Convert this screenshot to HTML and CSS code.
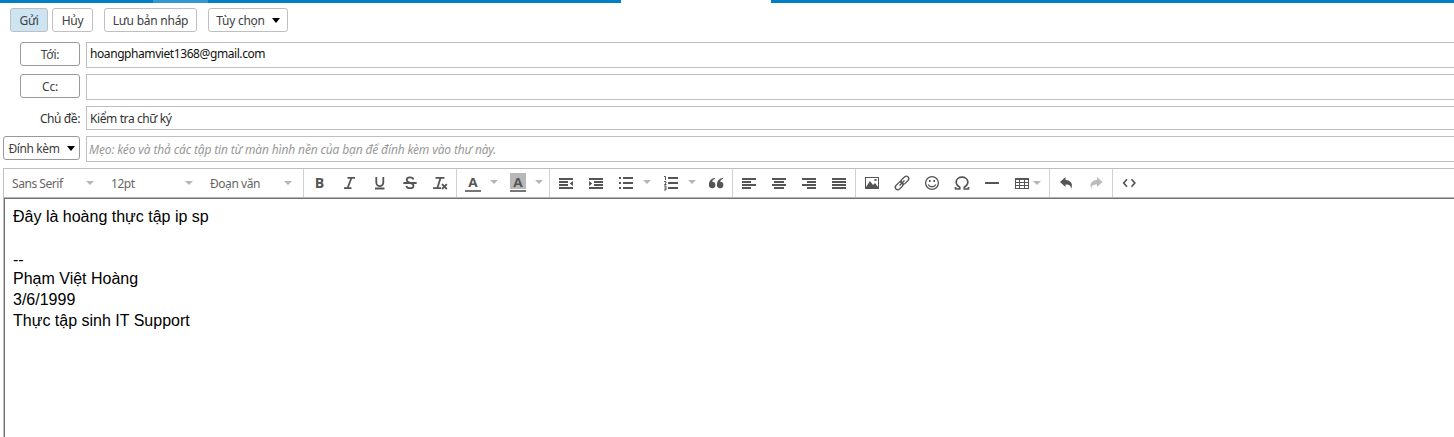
FILE: index.html
```html
<!DOCTYPE html>
<html lang="vi">
<head>
<meta charset="utf-8">
<title>Soạn thư</title>
<link rel="stylesheet" href="styles.css">
</head>
<body>
<div class="tabs"><span class="tab-app"></span><span class="tab-active"></span></div>
<div class="actions">
  <button class="btn send"><span>Gửi</span></button>
  <button class="btn cancel"><span>Hủy</span></button>
  <button class="btn draft"><span>Lưu bản nháp</span></button>
  <button class="btn options"><span>Tùy chọn</span><i class="caret"></i></button>
</div>
<div class="header">
  <div class="row to"><div class="label"><button class="btn dark pick"><span>Tới:</span></button></div><div class="field"><span class="address">hoangphamviet1368@gmail.com</span></div></div>
  <div class="row cc"><div class="label"><button class="btn dark pick"><span>Cc:</span></button></div><div class="field"></div></div>
  <div class="row subject"><div class="label"><span class="subject-label">Chủ đề:</span></div><div class="field"><span class="subject-text">Kiểm tra chữ ký</span></div></div>
  <div class="row attach"><div class="label"><button class="btn dark attach-btn"><span>Đính kèm</span><i class="caret"></i></button></div><div class="field"><span class="hint">Mẹo: kéo và thả các tập tin từ màn hình nền của bạn để đính kèm vào thư này.</span></div></div>
</div>
<div class="composer">
  <div class="toolbar">
    <div class="group selects">
      <div class="select font"><span>Sans Serif</span><i class="arrow"></i></div>
      <div class="select size"><span>12pt</span><i class="arrow"></i></div>
      <div class="select block"><span>Đoạn văn</span><i class="arrow"></i></div>
    </div>
    <div class="group">
      <div class="tool"><svg viewBox="0 0 20 20"><text class="glyph bold" x="4.8" y="15" textLength="9.5" lengthAdjust="spacingAndGlyphs">B</text></svg></div>
      <div class="tool"><svg viewBox="0 0 20 20"><path class="line" d="M7.500 4.800h7.500M4 15.200h7.500M11.400 5 7.600 15"/></svg></div>
      <div class="tool"><svg viewBox="0 0 20 20"><path class="line" d="M6.300 4v5.600a3.500 3.500 0 0 0 7 0V4M5 15.500h9.500"/></svg></div>
      <div class="tool"><svg viewBox="0 0 20 20"><path class="line" d="M13.500 6.500C12.600 3.500 6.600 3.600 6.700 7c.1 3.700 6.800 2.100 6.800 5.700 0 3.200-6.300 3.400-7.200.2M3.300 10h13.300"/></svg></div>
      <div class="tool"><svg viewBox="0 0 20 20"><path class="line" d="M5.500 4.800h9M3 15.200h8M10.500 5 7.400 15M12 11.200l4.800 4.800M16.800 11.200 12 16"/></svg></div>
    </div>
    <div class="group">
      <div class="tool split"><svg viewBox="0 0 20 20"><text class="glyph" x="5.2" y="14" textLength="9.400" lengthAdjust="spacingAndGlyphs">A</text><path fill="#777" d="M2 17h16v2H2z"/></svg><i class="arrow"></i></div>
      <div class="tool split"><svg viewBox="0 0 20 20"><path fill="#b8b8b8" d="M2 0h16v16H2z"/><text class="glyph" x="5.2" y="14" textLength="9.400" lengthAdjust="spacingAndGlyphs">A</text><path fill="#777" d="M2 17h16v2H2z"/></svg><i class="arrow"></i></div>
    </div>
    <div class="group">
      <div class="tool"><svg viewBox="0 0 20 20"><path d="M3 5h14v2H3zM3 8h9v2H3zM3 11h9v2H3zM3 14h14v2H3zM17 8v5l-3.300-2.500z"/></svg></div>
      <div class="tool"><svg viewBox="0 0 20 20"><path d="M3 5h14v2H3zM8 8h9v2H8zM8 11h9v2H8zM3 14h14v2H3zM3 8v5l3.300-2.500z"/></svg></div>
      <div class="tool split"><svg viewBox="0 0 20 20"><path d="M7 4h10v2H7zM7 9h10v2H7zM7 14h10v2H7zM3 4h2v2H3zM3 9h2v2H3zM3 14h2v2H3z"/></svg><i class="arrow"></i></div>
      <div class="tool split"><svg viewBox="0 0 20 20"><path d="M7 4h10v2H7zM7 9h10v2H7zM7 14h10v2H7z"/><path class="fine" d="M3 3.500h1.500v3.500M3 8.500h2v1.500L3.500 11.500H5.500M3 13h2v4H3M3.300 15H5"/></svg><i class="arrow"></i></div>
      <div class="tool"><svg viewBox="0 0 20 20"><path d="M9 5C5.300 5 3 8 3 11.500A3.200 3.200 0 1 0 6.200 8.800C6.500 7.300 7.500 6.200 9 6zM17 5C13.300 5 11 8 11 11.500A3.200 3.200 0 1 0 14.200 8.800C14.500 7.300 15.500 6.200 17 6z"/></svg></div>
    </div>
    <div class="group">
      <div class="tool"><svg viewBox="0 0 20 20"><path d="M3 5h14v2H3zM3 8h9v2H3zM3 11h14v2H3zM3 14h9v2H3z"/></svg></div>
      <div class="tool"><svg viewBox="0 0 20 20"><path d="M3 5h14v2H3zM5 8h10v2H5zM3 11h14v2H3zM5 14h10v2H5z"/></svg></div>
      <div class="tool"><svg viewBox="0 0 20 20"><path d="M3 5h14v2H3zM8 8h9v2H8zM3 11h14v2H3zM8 14h9v2H8z"/></svg></div>
      <div class="tool"><svg viewBox="0 0 20 20"><path d="M3 5h14v2H3zM3 8h14v2H3zM3 11h14v2H3zM3 14h14v2H3z"/></svg></div>
    </div>
    <div class="group">
      <div class="tool"><svg viewBox="0 0 20 20"><path fill-rule="evenodd" d="M3 4h14v12H3zM4 5v9l4-6 3 4 2-2 3 4V5zM12.500 6h2v2h-2z"/></svg></div>
      <div class="tool"><svg viewBox="0 0 20 20"><g class="thin" transform="rotate(-45 10 10)"><rect x="1.500" y="7.500" width="9" height="5" rx="2.500"/><rect x="9.500" y="7.500" width="9" height="5" rx="2.500"/><path d="M6.500 10h7"/></g></svg></div>
      <div class="tool"><svg viewBox="0 0 20 20"><circle class="thin" cx="10" cy="10" r="6.400"/><path d="M7 7h1.600v2H7zM11.400 7H13v2h-1.600z"/><path class="thin" d="M6.200 11.500c1.500 3 6.100 3 7.600 0"/></svg></div>
      <div class="tool"><svg viewBox="0 0 20 20"><path class="omega" d="M3.500 16h4.200v-1.800C5 12.500 4 10.800 4.200 8.700c.4-6 11.200-6 11.600 0 .2 2.100-.8 3.800-3.500 5.500V16h4.200M3.500 16.500V14M16.500 16.500V14"/></svg></div>
      <div class="tool"><svg viewBox="0 0 20 20"><path d="M3 9h14v2H3z"/></svg></div>
      <div class="tool table"><svg viewBox="0 0 20 20"><path fill-rule="evenodd" d="M3 5h14v11H3zM4 7v2h3V7zM8 7v2h4V7zM13 7v2h3V7zM4 10v2h3v-2zM8 10v2h4v-2zM13 10v2h3v-2zM4 13v2h3v-2zM8 13v2h4v-2zM13 13v2h3v-2z"/></svg><i class="arrow"></i></div>
    </div>
    <div class="group">
      <div class="tool"><svg viewBox="0 0 20 20"><path d="M9.500 4v3c5.500 0 8 4.500 5.500 9 0-3.500-1.500-4.500-5.500-4.500V14L4 9z"/></svg></div>
      <div class="tool off"><svg viewBox="0 0 20 20"><path d="M11 4v3c-5.500 0-8 4.500-5.500 9 0-3.500 1.500-4.500 5.500-4.500V14l5.500-5z"/></svg></div>
    </div>
    <div class="group last">
      <div class="tool"><svg viewBox="0 0 20 20"><path class="code" d="M8 6.300 4.700 10 8 13.700M12.500 6.300 15.800 10l-3.300 3.700"/></svg></div>
    </div>
  </div>
  <div class="body">
    <p class="line-1">Đây là hoàng thực tập ip sp</p>
    <p class="line-2">--</p>
    <p class="line-3">Phạm Việt Hoàng</p>
    <p class="line-4">3/6/1999</p>
    <p class="line-5">Thực tập sinh IT Support</p>
  </div>
</div>
</body>
</html>
```
FILE: styles.css
```css
* { box-sizing: border-box; }
body { margin: 0; width: 1454px; height: 437px; overflow: hidden; background: #fff; color: #333; font: 12px/16px "Noto Sans", "Open Sans", sans-serif; }
span, p { white-space: nowrap; }
.tabs { display: flex; height: 3px; padding-left: 153px; background: #007fc4; }
.tab-app { width: 55px; background: #3399d5; }
.tab-active { width: 150px; margin-left: 413px; background: #fff; }

.actions { display: flex; height: 39px; padding: 5px 0 0 10px; }
.btn { display: flex; align-items: center; justify-content: center; height: 24px; padding: 0; border: 1px solid #bfbfbf; border-radius: 3px; background: #fff; color: #404040; font: inherit; }
.btn span { padding-top: 2px; letter-spacing: -0.25px; }
.btn.dark { border-color: #999; }
.send { width: 38px; background: #cde4f3; }
.cancel { width: 41px; margin-left: 4px; }
.draft { width: 93px; margin-left: 11px; }
.options { width: 80px; margin-left: 11px; gap: 7px; }
.caret { border: 4px solid transparent; border-top: 5px solid #000; border-bottom: 0; }

.row { display: flex; }
.to, .cc { height: 32px; }
.subject { height: 30px; }
.attach { height: 32px; }
.label { display: flex; align-items: flex-start; justify-content: flex-end; width: 80px; margin-right: 6px; }
.pick { width: 60px; }
.field { display: flex; align-items: center; flex: 1; height: 26px; padding: 2px 0 0 3px; border: 1px solid #bfbfbf; border-right: 0; }
.subject .field { height: 24px; }
.to .field { padding-top: 0; padding-bottom: 2px; color: #111; }
.address { letter-spacing: -0.42px; }
.header { display: flex; flex-direction: column; }
.subject-label { padding-top: 5px; letter-spacing: -0.4px; }
.subject-text { letter-spacing: -0.4px; }
.attach-btn { width: 77px; gap: 7px; }
.attach-btn.btn span { letter-spacing: -0.38px; }
.attach .field { padding-left: 2px; }
.hint { color: #999; font-style: italic; letter-spacing: -0.145px; }

.composer { margin-left: 3px; border-left: 1px solid #bfbfbf; border-top: 1px solid #bfbfbf; }
.toolbar { display: flex; height: 29px; border-bottom: 1px solid #b5b5b5; }
.group { display: flex; align-items: center; padding: 0 1px; border-right: 1px solid #d2d2d2; }
.group.last { border-right: 0; }
.selects { width: 300px; padding: 0 11px 0 8px; color: #666; }
.select { display: flex; align-items: center; justify-content: space-between; }
.select span { padding-top: 2px; letter-spacing: -0.45px; }
.font { width: 82px; }
.size { width: 82px; margin-left: 17px; }
.block { width: 82px; margin-left: 17px; }
.arrow { border: 4px solid transparent; border-top-color: #b0b8bd; border-bottom: 0; }
.tool { display: flex; align-items: center; width: 30px; height: 28px; padding-left: 5px; color: #555; }
.tool svg { flex: none; width: 20px; height: 20px; fill: currentColor; }
.tool .arrow { margin-left: 7px; margin-top: -2px; }
.split { width: 45px; }
.table { width: 41px; }
.table .arrow { margin-left: 1px; margin-top: 0; }
.off { color: #bbb; }
.glyph { font: bold 13px "Open Sans", sans-serif; }
.glyph.bold { font-size: 15px; }
.line, .thin, .fine, .omega, .code { fill: none; stroke: currentColor; }
.line { stroke-width: 1.8; }
.thin { stroke-width: 1.3; }
.fine { stroke-width: 1; }
.omega { stroke-width: 1.7; }
.code { stroke-width: 1.7; }

.body { height: 239px; padding: 7px 0 0 8px; border-top: 1px solid #737373; border-left: 1px solid #737373; color: #000; font: 16px/21px "Liberation Sans", Arial, sans-serif; }
.body p { margin: 0; }
.body .line-1 { margin-bottom: 22px; }
.body .line-2 { margin-bottom: -2px; }
```
